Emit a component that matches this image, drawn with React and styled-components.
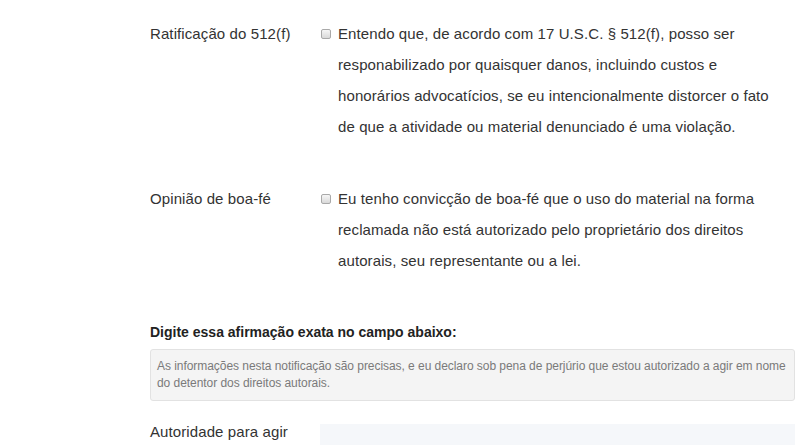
import React from "react";
import styled, {createGlobalStyle} from "styled-components";

const GlobalStyle = createGlobalStyle`
  html, body {
    margin: 0;
    padding: 0;
    background: #fff;
  }
  body {
    font-family: "Liberation Sans", Arial, sans-serif;
    color: #333;
  }
`;

const rows = [
    {
        label: "Ratificação do 512(f)",
        text: "Entendo que, de acordo com 17 U.S.C. § 512(f), posso ser responabilizado por quaisquer danos, incluindo custos e honorários advocatícios, se eu intencionalmente distorcer o fato de que a atividade ou material denunciado é uma violação."
    },
    {
        label: "Opinião de boa-fé",
        text: "Eu tenho convicção de boa-fé que o uso do material na forma reclamada não está autorizado pelo proprietário dos direitos autorais, seu representante ou a lei."
    }
];

const App = () => {
    return (
        <Page>
            <GlobalStyle/>
            {rows.map((row) => (
                <FormRow key={row.label}>
                    <Label>{row.label}</Label>
                    <CheckField>
                        <Box type="checkbox"/>
                        <CheckText>{row.text}</CheckText>
                    </CheckField>
                </FormRow>
            ))}

            <Heading>Digite essa afirmação exata no campo abaixo:</Heading>
            <Statement>
                As informações nesta notificação são precisas, e eu declaro sob pena de perjúrio que estou
                autorizado a agir em nome do detentor dos direitos autorais.
            </Statement>

            <InputRow>
                <Label>Autoridade para agir</Label>
                <TextInput type="text"/>
            </InputRow>
        </Page>
    );
};

export default App;

const Page = styled.div`
  width: 800px;
  height: 445px;
  overflow: hidden;
  box-sizing: border-box;
  padding: 18px 5px 0 150px;
`;

const FormRow = styled.div`
  display: grid;
  grid-template-columns: 170px 1fr;
  margin-bottom: 41px;
`;

const Label = styled.div`
  font-size: 15px;
  line-height: 31px;
  letter-spacing: 0.1px;
  color: #333;
`;

const CheckField = styled.label`
  display: flex;
  align-items: flex-start;
`;

const Box = styled.input`
  appearance: none;
  box-sizing: border-box;
  width: 10px;
  height: 10px;
  margin: 11px 7px 0 1px;
  flex: none;
  border: 1px solid #a9a9a9;
  border-radius: 2px;
  background: linear-gradient(#f6f6f6, #d9d9d9);
`;

const CheckText = styled.span`
  font-size: 15px;
  line-height: 31px;
  letter-spacing: 0.1px;
  color: #333;
  width: 440px;
`;

const Heading = styled.h4`
  margin: 0 0 8px;
  padding-top: 6px;
  font-size: 14px;
  line-height: 18px;
  font-weight: bold;
  color: #222;
`;

const Statement = styled.div`
  background: #f4f4f4;
  border: 1px solid #e2e2e2;
  border-radius: 3px;
  padding: 8px 6px 8px 6px;
  font-size: 12px;
  line-height: 17px;
  letter-spacing: -0.05px;
  color: #7a7a7a;
`;

const InputRow = styled.div`
  display: grid;
  grid-template-columns: 170px 1fr;
  margin-top: 15px;
  align-items: start;
`;

const TextInput = styled.input`
  height: 34px;
  border: none;
  background: #f5f7fa;
  margin-top: 8px;
  outline: none;
`;
